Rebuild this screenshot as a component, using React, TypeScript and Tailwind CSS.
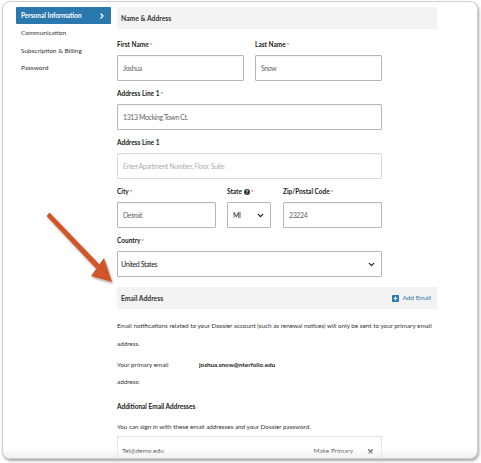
import { ChevronRight, ChevronDown, X } from "lucide-react";

const navItems = ["Communication", "Subscription & Billing", "Password"];

const Req = () => <span className="text-[#d9534f] ml-[1px] align-top text-[6px]">*</span>;

const Label = ({ text, req = true, help = false }: { text: string; req?: boolean; help?: boolean }) => (
  <div className="h-[10px] leading-[10px] mb-[5px] text-[6.5px] font-bold text-[#222] flex items-center">
    {text}
    {help && (
      <span className="ml-[2px] w-[6px] h-[6px] rounded-full bg-[#333] text-white text-[5px] leading-[6px] flex items-center justify-center">?</span>
    )}
    {req && <Req />}
  </div>
);

const Input = ({ value, placeholder = false }: { value: string; placeholder?: boolean }) => (
  <div
    className={
      "h-[26px] border rounded-[1px] bg-white flex items-center px-[5px] text-[7px] tracking-[-0.4px] shadow-[inset_0_1px_1px_rgba(0,0,0,0.05)] " +
      (placeholder ? "text-[#b0b0b0] border-[#d7dbe0]" : "text-[#666] border-[#b3b9c2]")
    }
  >
    {value}
  </div>
);

const Select = ({ value, className = "" }: { value: string; className?: string }) => (
  <div
    className={
      "h-[26px] border border-[#b3b9c2] rounded-[1px] flex items-center justify-between pr-[5px] text-[7px] tracking-[-0.4px] text-[#222] " +
      className
    }
  >
    {value}
    <ChevronDown size={9} strokeWidth={3.5} />
  </div>
);

const SectionBar = ({ title, action }: { title: string; action?: boolean }) => (
  <div className="h-[22px] bg-[#f3f3f3] flex items-center justify-between px-[4px] pr-[6px]">
    <span className="text-[6.8px] font-bold text-[#333]">{title}</span>
    {action && (
      <span className="flex items-center gap-[3px] text-[6.5px] text-[#2a78b0]">
        <svg width="7" height="7" viewBox="0 0 7 7">
          <rect width="7" height="7" rx="1" fill="#2a78b0" />
          <path d="M3.5 1.6v3.8M1.6 3.5h3.8" stroke="white" strokeWidth="1.2" />
        </svg>
        Add Email
      </span>
    )}
  </div>
);

export default function App() {
  return (
    <div className="w-[481px] h-[463px] bg-white relative overflow-hidden font-['Lato',sans-serif]">
      <div className="absolute left-[2px] top-[1px] w-[476px] h-[458px] rounded-[8px] border border-[#cfcfcf] bg-white shadow-[1px_2px_3px_rgba(0,0,0,0.35)] overflow-hidden">
        <div className="flex pl-[13px] pt-[5px]">
          {/* sidebar */}
          <div className="w-[95px] shrink-0">
            <div className="h-[17px] bg-[#2b78ae] rounded-[1px] flex items-center justify-between px-[5px] text-white text-[6.5px] font-bold">
              Personal Information
              <ChevronRight size={8} strokeWidth={4} />
            </div>
            <div className="flex flex-col">
              {navItems.map((item) => (
                <div key={item} className="h-[17.5px] leading-[17.5px] pl-[5px] text-[6.5px] text-[#333]">
                  {item}
                </div>
              ))}
            </div>
          </div>

          {/* main */}
          <div className="w-[320px] ml-[6px] text-[#333]">
            <SectionBar title="Name & Address" />

            <div className="w-[265px]">
              <div className="flex gap-[11px] mt-[11px]">
                <div className="flex-1">
                  <Label text="First Name" />
                  <Input value="Joshua" />
                </div>
                <div className="flex-1">
                  <Label text="Last Name" />
                  <Input value="Snow" />
                </div>
              </div>

              <div className="mt-[8px]">
                <Label text="Address Line 1" />
                <Input value="1313 Mocking Town Ct." />
              </div>

              <div className="mt-[8px]">
                <Label text="Address Line 1" req={false} />
                <Input value="Enter Apartment Number, Floor, Suite" placeholder />
              </div>

              <div className="flex mt-[8px]">
                <div className="w-[99px]">
                  <Label text="City" />
                  <Input value="Detroit" />
                </div>
                <div className="w-[44px] ml-[11px]">
                  <Label text="State" help />
                  <Select value="MI" className="pl-[5px]" />
                </div>
                <div className="w-[99px] ml-[12px]">
                  <Label text="Zip/Postal Code" />
                  <Input value="23224" />
                </div>
              </div>

              <div className="mt-[8px]">
                <Label text="Country" />
                <Select value="United States" className="pl-[3px]" />
              </div>
            </div>

            <div className="mt-[10px]">
              <SectionBar title="Email Address" action />
            </div>

            <div className="mt-[8px] text-[6.3px] leading-[18px] text-[#333]">
              <div className="whitespace-nowrap">
                Email notifications related to your Dossier account (such as renewal notices) will only be sent to your primary email
              </div>
              <div>address.</div>
            </div>

            <div className="flex mt-[3px] text-[6.3px] leading-[17px]">
              <div className="w-[82px]">
                Your primary email
                <br />
                address:
              </div>
              <div className="font-bold text-[#222]">joshua.snow@nterfolio.edu</div>
            </div>

            <div className="mt-[8px] text-[6.5px] font-bold leading-[17px] text-[#222]">Additional Email Addresses</div>
            <div className="mt-[3px] text-[6.3px] leading-[17px]">
              You can sign in with these email addresses and your Dossier password.
            </div>

            <div className="mt-[1px] w-[265px] h-[30px] border border-[#e3e3e3] flex items-center justify-between pl-[4px] pr-[7px] text-[6.5px]">
              <span>Tel@demo.edu</span>
              <span className="flex items-center gap-[14px] text-[#444]">
                Make Primary
                <X size={7} strokeWidth={4} className="text-[#555]" />
              </span>
            </div>
          </div>
        </div>

        {/* bottom fade */}
        <div className="absolute left-0 right-0 bottom-0 h-[9px] bg-gradient-to-b from-transparent to-[#f0f0f0]" />
      </div>

      {/* annotation arrow */}
      <svg className="absolute left-0 top-0" width="481" height="463" viewBox="0 0 481 463">
        <defs>
          <filter id="sh" x="-20%" y="-20%" width="140%" height="140%">
            <feDropShadow dx="1" dy="1.5" stdDeviation="1.2" floodColor="#000" floodOpacity="0.4" />
          </filter>
        </defs>
        <g filter="url(#sh)" fill="#d0562c">
          <path d="M46.5 216 L49.5 212.5 L100 265 L96 268.5 Z" />
          <path d="M91 276 L104 258 L112 282 Z" />
        </g>
      </svg>
    </div>
  );
}
